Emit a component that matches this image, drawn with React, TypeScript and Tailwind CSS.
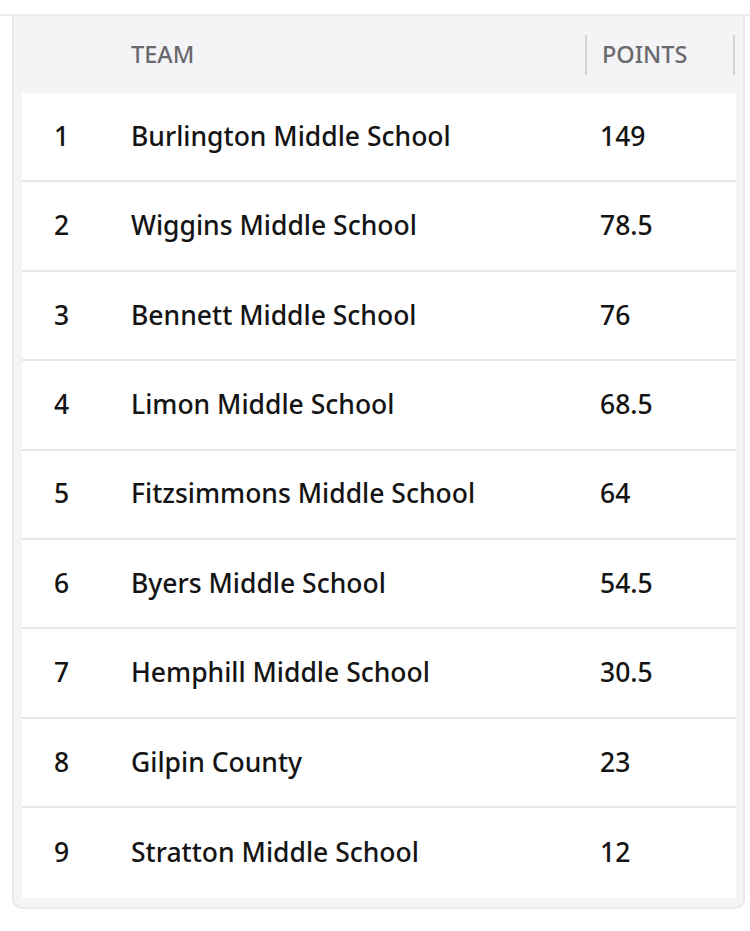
import React from 'react'

const teams = [
  { rank: 1, name: 'Burlington Middle School', points: '149' },
  { rank: 2, name: 'Wiggins Middle School', points: '78.5' },
  { rank: 3, name: 'Bennett Middle School', points: '76' },
  { rank: 4, name: 'Limon Middle School', points: '68.5' },
  { rank: 5, name: 'Fitzsimmons Middle School', points: '64' },
  { rank: 6, name: 'Byers Middle School', points: '54.5' },
  { rank: 7, name: 'Hemphill Middle School', points: '30.5' },
  { rank: 8, name: 'Gilpin County', points: '23' },
  { rank: 9, name: 'Stratton Middle School', points: '12' },
]

export default function App() {
  return (
    <div className="w-[750px] h-[931px] bg-white pt-[14px]" style={{ fontFamily: '"Noto Sans", Arial, sans-serif' }}>
      <div className="border-t-2 border-[#ececee]">
        <div className="ml-[12px] w-[733px] rounded-b-[10px] border-x-2 border-b-2 border-[#e9e9ec] bg-[#f4f4f6] pl-[8px] pr-[7px] pb-[9px]">
          {/* header */}
          <div className="flex h-[77px] items-center text-[23.5px] font-medium text-[#6a6a6e]">
            <div className="w-[109px]" />
            <div className="flex-1">TEAM</div>
            <div className="flex h-[40px] w-[150px] items-center border-x-2 border-[#d6d6da] pl-[15px]">POINTS</div>
            <div className="w-[1px]" />
          </div>

          {/* rows */}
          <div className="bg-white">
            {teams.map((t, i) => (
              <div
                key={t.rank}
                className={'flex h-[89.4px] items-center text-[26.5px] font-medium text-[#141414] ' + (i < teams.length - 1 ? 'border-b-2 border-[#e7e7ea]' : '')}
              >
                <div className="w-[109px] pl-[32px]">{t.rank}</div>
                <div className="flex-1">{t.name}</div>
                <div className="w-[136px]">{t.points}</div>
              </div>
            ))}
          </div>
        </div>
      </div>
    </div>
  )
}
